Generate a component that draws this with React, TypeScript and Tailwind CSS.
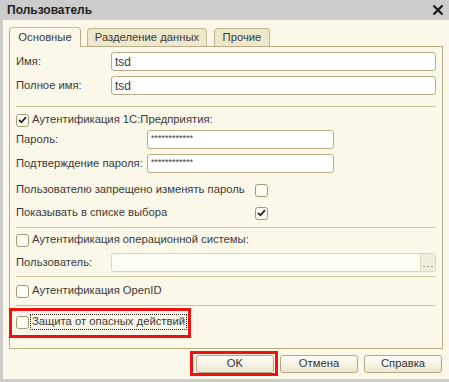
import { type FC, type ReactNode } from "react";

const Check: FC<{ checked?: boolean }> = ({ checked }) => (
	<span className="w-[13px] h-[13px] shrink-0 rounded-[3px] border border-[#a59a76] bg-[#fffef9] flex items-center justify-center">
		{checked && (
			<svg width="9" height="8" viewBox="0 0 9 8">
				<path d="M1 3.8 L3.4 6.3 L8 1.2" fill="none" stroke="#222" strokeWidth="1.8" />
			</svg>
		)}
	</span>
);

const Field: FC<{ children?: ReactNode; className?: string }> = ({
	children,
	className,
}) => (
	<div
		className={`h-full rounded-[3px] border border-[#b8ac86] bg-white flex items-center pl-[3px] ${className ?? ""}`}
	>
		{children}
	</div>
);

const Sep = ({ mt }: { mt: string }) => (
	<div className={`${mt} h-px bg-[#cbc09c]`} />
);

const Btn: FC<{ label: string }> = ({ label }) => (
	<div className="w-[78px] h-[18px] rounded-[3px] border border-[#b4a982] bg-gradient-to-b from-[#fffef8] to-[#ece7d1] flex items-center justify-center text-[#333]">
		{label}
	</div>
);

export default function App() {
	return (
		<div className="relative w-[449px] h-[382px] bg-[#cccccc] font-['Liberation_Sans',Arial,sans-serif] text-[#3a3a3a] text-[11.25px] leading-none whitespace-nowrap overflow-hidden">
			{/* title bar */}
			<div className="h-[20px] flex items-center justify-between pl-[7px] pr-[4px]">
				<span className="text-[12px] font-bold text-[#222]">Пользователь</span>
				<svg width="12" height="12" viewBox="0 0 12 12" className="mr-[1px]">
					<path d="M1.5 1.5 L10.5 10.5 M10.5 1.5 L1.5 10.5" stroke="#1e1e1e" strokeWidth="2.3" />
				</svg>
			</div>

			<div className="ml-[3px] h-[359px] bg-[#fbf8e9] flex flex-col">
				{/* tabs */}
				<div className="h-[26px] pl-[6px] flex items-end">
					<div className="relative z-10 -mb-px w-[72px] h-[20px] rounded-t-[4px] border border-b-0 border-[#b8ac86] border-t-[#e2b864] bg-[#fbf8e9] flex items-center justify-center">
						Основные
					</div>
					<div className="ml-[6px] w-[120px] h-[18px] rounded-t-[4px] border border-b-0 border-[#c2b792] bg-[#ede7cb] flex items-center justify-center">
						Разделение данных
					</div>
					<div className="ml-[7px] w-[56px] h-[18px] rounded-t-[4px] border border-b-0 border-[#c2b792] bg-[#ede7cb] flex items-center justify-center">
						Прочие
					</div>
				</div>

				{/* panel */}
				<div className="ml-[6px] w-[434px] h-[303px] border border-[#b9ad87] px-[6px] flex flex-col">
					<div className="mt-[5px] h-[19px] flex items-center">
						<span className="w-[95px]">Имя:</span>
						<Field className="flex-1 text-[12px]">tsd</Field>
					</div>
					<div className="mt-[5px] h-[19px] flex items-center">
						<span className="w-[95px]">Полное имя:</span>
						<Field className="flex-1 text-[12px]">tsd</Field>
					</div>
					<Sep mt="mt-[11px]" />
					<div className="mt-[5px] h-[16px] flex items-center gap-[3px]">
						<Check checked />
						<span>Аутентификация 1С:Предприятия:</span>
					</div>
					<div className="mt-[2px] h-[19px] flex items-center">
						<span className="w-[131px]">Пароль:</span>
						<Field className="w-[187px] items-start pt-[3px] text-[9px]">************</Field>
					</div>
					<div className="mt-[5px] h-[19px] flex items-center">
						<span className="w-[131px]">Подтверждение пароля:</span>
						<Field className="w-[187px] items-start pt-[3px] text-[9px]">************</Field>
					</div>
					<div className="mt-[9px] h-[16px] flex items-center">
						<span className="w-[239px]">Пользователю запрещено изменять пароль</span>
						<Check />
					</div>
					<div className="mt-[7px] h-[16px] flex items-center">
						<span className="w-[239px]">Показывать в списке выбора</span>
						<Check checked />
					</div>
					<Sep mt="mt-[6px]" />
					<div className="mt-[4px] h-[16px] flex items-center gap-[3px]">
						<Check />
						<span>Аутентификация операционной системы:</span>
					</div>
					<div className="mt-[5px] h-[19px] flex items-center">
						<span className="w-[95px]">Пользователь:</span>
						<div className="flex-1 h-full rounded-[3px] border border-[#ddd5ba] bg-[#fdfcf4] flex">
							<div className="flex-1" />
							<div className="w-[15px] h-full border-l border-[#ddd5ba] bg-[#f1edda] rounded-r-[3px] flex items-end justify-center pb-[4px] gap-[2px]">
								<span className="w-[2px] h-[1px] bg-[#9b9b9b]" />
								<span className="w-[2px] h-[1px] bg-[#9b9b9b]" />
								<span className="w-[2px] h-[1px] bg-[#9b9b9b]" />
							</div>
						</div>
					</div>
					<Sep mt="mt-[4px]" />
					<div className="mt-[6px] h-[16px] flex items-center gap-[3px]">
						<Check />
						<span>Аутентификация OpenID</span>
					</div>
					<Sep mt="mt-[6px]" />
					<div className="mt-[8px] h-[16px] flex items-center gap-[1px]">
						<Check />
						<span className="border border-dotted border-[#222] px-px py-[1px]">
							Защита от опасных действий
						</span>
					</div>
				</div>

				{/* buttons */}
				<div className="mt-[6px] pr-[7px] flex justify-end gap-[6px]">
					<Btn label="OK" />
					<Btn label="Отмена" />
					<Btn label="Справка" />
				</div>
			</div>

			{/* red annotation frames */}
			<div className="absolute left-[9px] top-[308px] w-[182px] h-[30px] border-[3px] border-[#f01010]" />
			<div className="absolute left-[190px] top-[351px] w-[88px] h-[25px] border-[3px] border-[#f01010]" />
		</div>
	);
}
